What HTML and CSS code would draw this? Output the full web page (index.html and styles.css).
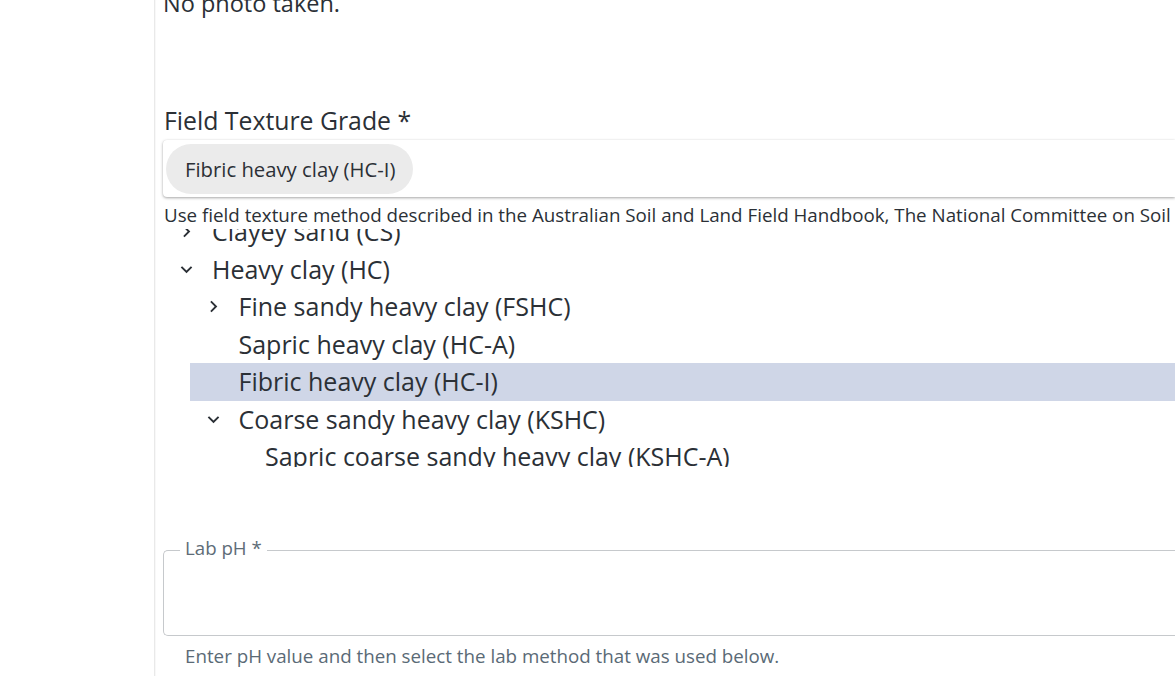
FILE: index.html
```html
<!DOCTYPE html>
<html>
<head>
<meta charset="utf-8">
<link rel="stylesheet" href="styles.css">
</head>
<body>
<div class="layout">
  <aside class="sidebar"></aside>
  <main class="main">
    <div class="content">
      <p class="photo-text">No photo taken.</p>

      <section class="field texture">
        <h2 class="field-label">Field Texture Grade *</h2>
        <div class="select-box">
          <span class="chip">Fibric heavy clay (HC-I)</span>
        </div>
        <p class="helper dark">Use field texture method described in the Australian Soil and Land Field Handbook, The National Committee on Soil and Terrain</p>
        <div class="tree">
          <ul class="tree-list scrolled">
            <li class="item">
              <div class="row"><span class="twisty"><svg viewBox="0 0 24 24"><path d="M10 6 8.59 7.41 13.17 12l-4.58 4.59L10 18l6-6z"/></svg></span><span class="label">Clayey sand (CS)</span></div>
            </li>
            <li class="item">
              <div class="row"><span class="twisty"><svg viewBox="0 0 24 24"><path d="M16.59 8.59 12 13.17 7.41 8.59 6 10l6 6 6-6z"/></svg></span><span class="label">Heavy clay (HC)</span></div>
              <ul class="tree-list group">
                <li class="item">
                  <div class="row"><span class="twisty"><svg viewBox="0 0 24 24"><path d="M10 6 8.59 7.41 13.17 12l-4.58 4.59L10 18l6-6z"/></svg></span><span class="label">Fine sandy heavy clay (FSHC)</span></div>
                </li>
                <li class="item">
                  <div class="row"><span class="twisty"></span><span class="label">Sapric heavy clay (HC-A)</span></div>
                </li>
                <li class="item">
                  <div class="row selected"><span class="twisty"></span><span class="label">Fibric heavy clay (HC-I)</span></div>
                </li>
                <li class="item">
                  <div class="row"><span class="twisty"><svg viewBox="0 0 24 24"><path d="M16.59 8.59 12 13.17 7.41 8.59 6 10l6 6 6-6z"/></svg></span><span class="label">Coarse sandy heavy clay (KSHC)</span></div>
                  <ul class="tree-list group">
                    <li class="item">
                      <div class="row"><span class="twisty"></span><span class="label">Sapric coarse sandy heavy clay (KSHC-A)</span></div>
                    </li>
                  </ul>
                </li>
              </ul>
            </li>
          </ul>
        </div>
      </section>

      <section class="field ph">
        <fieldset class="outlined">
          <legend class="legend">Lab pH *</legend>
          <input class="ph-input" type="text">
        </fieldset>
        <p class="helper muted">Enter pH value and then select the lab method that was used below.</p>
      </section>
    </div>
  </main>
</div>
</body>
</html>
```

FILE: styles.css
```css
* { box-sizing: border-box; }
html, body {
  margin: 0;
  padding: 0;
  background: #fff;
  height: 100%;
  overflow: hidden;
}
body {
  font-family: "Open Sans", "Noto Sans", sans-serif;
  color: #2b3036;
}
.layout {
  display: flex;
  height: 676px;
}
.sidebar {
  width: 154px;
  flex: none;
}
.main {
  flex: 1;
  border-left: 1px solid #e9e9e9;
  box-shadow: inset 1px 0 1px rgba(0,0,0,0.03);
  padding-left: 8px;
  overflow: hidden;
}
.content {
  margin-top: -13px;
}
.photo-text {
  margin: 0;
  font-size: 23.5px;
  line-height: 32px;
}
.texture {
  margin-top: 85px;
}
.field-label {
  margin: 0;
  font-weight: 400;
  font-size: 24.8px;
  line-height: 32px;
  padding-left: 1px;
}
.select-box {
  margin-top: 4px;
  height: 57px;
  padding: 3px;
  background: #fff;
  border-radius: 4px 0 0 4px;
  box-shadow: 0 1px 3px rgba(0,0,0,0.35), 0 0 1px rgba(0,0,0,0.08);
  display: flex;
  align-items: center;
}
.chip {
  display: inline-flex;
  align-items: center;
  height: 50px;
  padding: 0 18px 0 19px;
  border-radius: 25px;
  background: #ebebeb;
  font-size: 20.3px;
  color: #2b3036;
}
.helper {
  margin: 0;
  white-space: nowrap;
}
.helper.dark {
  font-size: 18.75px;
  line-height: 24px;
  padding-left: 1px;
  margin-top: 6px;
}
.tree {
  height: 238px;
  margin-top: 2px;
  overflow: hidden;
}
.tree-list {
  list-style: none;
  margin: 0;
  padding: 0;
}
.tree-list.scrolled {
  margin-top: -16px;
}
.tree-list.group {
  margin-left: 26.5px;
}
.row {
  display: flex;
  align-items: center;
  height: 37.5px;
  font-size: 25px;
  color: #2b3036;
}
.row.selected {
  background: #cfd6e7;
}
.twisty {
  width: 49px;
  flex: none;
  display: flex;
  align-items: center;
  padding-left: 12px;
}
.twisty svg {
  width: 23px;
  height: 23px;
  fill: #2b3036;
}
.label {
  white-space: nowrap;
  margin-top: -1px;
}
.ph {
  margin-top: 71px;
}
.outlined {
  margin: 0;
  padding: 0 14px;
  height: 98px;
  border: 1px solid #c6c9cc;
  border-radius: 5px;
  border-right: none;
  border-top-right-radius: 0;
  border-bottom-right-radius: 0;
}
.legend {
  padding: 0 5px 4px;
  margin-left: 2px;
  font-size: 18.7px;
  color: #5e6c77;
  line-height: 20px;
}
.ph-input {
  border: none;
  outline: none;
  width: 100%;
  height: 60px;
  font-family: inherit;
  font-size: 18px;
  background: transparent;
}
.helper.muted {
  font-size: 18.75px;
  line-height: 24px;
  color: #5a6a76;
  margin-top: 8px;
  padding-left: 22px;
}
```
